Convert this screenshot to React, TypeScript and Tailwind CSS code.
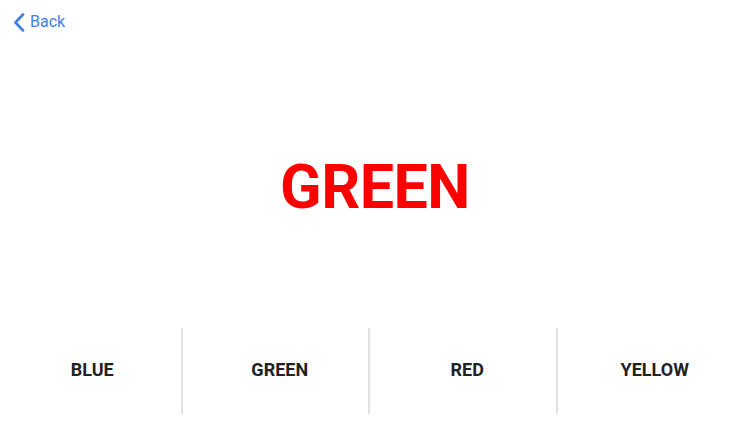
const choices = ['BLUE', 'GREEN', 'RED', 'YELLOW'];

export default function App() {
  return (
    <div className="flex h-[422px] w-[750px] flex-col bg-white font-['Roboto',sans-serif]">
      <div className="flex h-[44px] items-start px-[13px] pt-[12px]">
        <button type="button" className="flex items-center gap-[5px] text-[16px] leading-[20px] text-[#3f80e0]">
          <svg width="12" height="19" viewBox="0 0 12 19" fill="none">
            <path d="M10 1.5 2.5 9.5l7.5 8" stroke="#3f80e0" strokeWidth="2.6" strokeLinecap="round" strokeLinejoin="round" />
          </svg>
          Back
        </button>
      </div>

      <div className="flex flex-1 items-center justify-center pt-[3px]">
        <span className="text-[61px] font-bold leading-none tracking-[-0.5px] text-[#ff0000]">GREEN</span>
      </div>

      <div className="mb-[8px] grid h-[86px] grid-cols-4">
        {choices.map((choice, i) => (
          <div key={choice} className="relative flex">
            {i > 0 ? <span className="absolute inset-y-0 left-[-7px] w-[2px] bg-[#e2e2e2]" /> : null}
            <button
              type="button"
              className="flex flex-1 items-center justify-center pb-[3px] pr-[3px] text-[18px] font-bold text-[#222222]"
            >
              {choice}
            </button>
          </div>
        ))}
      </div>
    </div>
  );
}
